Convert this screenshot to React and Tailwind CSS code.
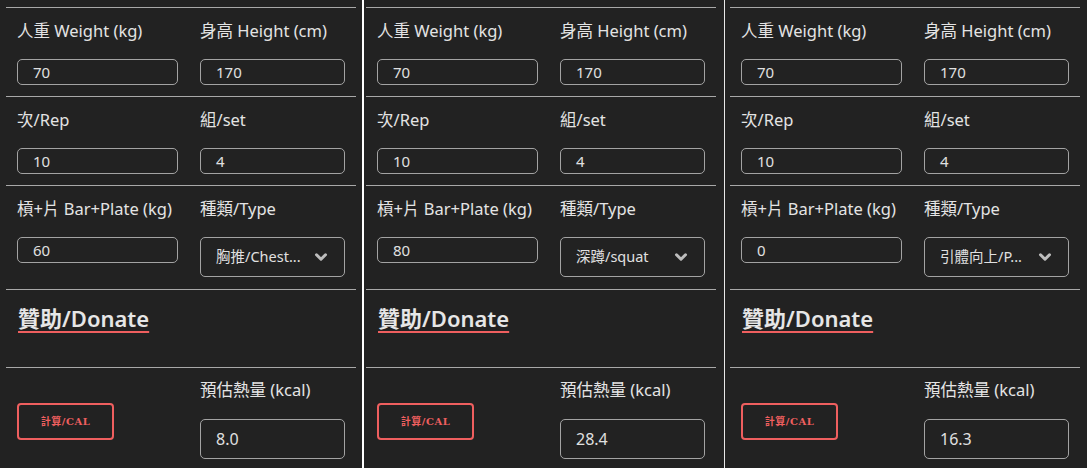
import { ChevronDown } from "lucide-react";

const panels = [
  { bar: "60", type: "胸推/Chest...", kcal: "8.0", shift: "ml-0", width: "w-[362px]" },
  { bar: "80", type: "深蹲/squat", kcal: "28.4", shift: "ml-[-4px]", width: "w-[360px]" },
  { bar: "0", type: "引體向上/P...", kcal: "16.3", shift: "ml-[-1px]", width: "w-[362px]" },
];

const font = { fontFamily: '"Noto Sans", "Noto Sans CJK TC", sans-serif' };

//Text Input
const Field = ({ label, value, wide }) => (
  <div className="flex flex-col">
    <p className="text-[16.5px] leading-[22px] text-[#e4e4e4]">{label}</p>
    <div
      className={`mt-[17px] h-[26px] rounded-[5px] border border-[#a3a3a3] pl-[15px] text-[15px] leading-[24px] text-[#e0e0e0] ${
        wide ? "w-[161px]" : "w-[145px]"
      }`}
    >
      {value}
    </div>
  </div>
);

const Panel = ({ bar, type, kcal, shift, width }) => (
  <div className={`${width} shrink-0 overflow-hidden pt-[7px]`}>
    <div className={`${shift} w-[362px] pl-[6px] pr-[6px]`}>
      {/* ROW 1 */}
      <div className="border-t border-[#a8a8a8] pt-[12px] pb-[11px] grid grid-cols-[183px_1fr] pl-[11px]">
        <Field label="人重 Weight (kg)" value="70" wide />
        <Field label="身高 Height (cm)" value="170" />
      </div>

      {/* ROW 2 */}
      <div className="border-t border-[#a8a8a8] pt-[12px] pb-[11px] grid grid-cols-[183px_1fr] pl-[11px]">
        <Field label="次/Rep" value="10" wide />
        <Field label="組/set" value="4" />
      </div>

      {/* ROW 3 */}
      <div className="border-t border-[#a8a8a8] pt-[12px] pb-[12px] grid grid-cols-[183px_1fr] pl-[11px]">
        <Field label="槓+片 Bar+Plate (kg)" value={bar} wide />
        <div className="flex flex-col">
          <p className="text-[16.5px] leading-[22px] text-[#e4e4e4]">種類/Type</p>
          <div className="mt-[17px] h-[40px] w-[145px] rounded-[5px] border border-[#a3a3a3] flex items-center justify-between pl-[15px] pr-[14px]">
            <span className="text-[14.5px] text-[#e0e0e0] whitespace-nowrap">{type}</span>
            <ChevronDown size={18} strokeWidth={4} className="text-[#bdbdbd]" />
          </div>
        </div>
      </div>

      {/* DONATE */}
      <div className="border-t border-[#a8a8a8] h-[78px] pl-[12px] pt-[14px]">
        <a className="text-[22px] leading-[28px] font-semibold text-[#e6e6e6] underline decoration-[#ef5f5f] decoration-2 underline-offset-[4px]">
          贊助/Donate
        </a>
      </div>

      {/* CALC */}
      <div className="border-t border-[#a8a8a8] pt-[11px] grid grid-cols-[183px_1fr] pl-[11px]">
        <div className="pt-[24px]">
          <button
            className="w-[97px] h-[37px] rounded-[4px] border-2 border-[#ef5f5f] text-[10px] font-bold text-[#ef5f5f] tracking-[0.5px]"
            style={{ fontFamily: '"DejaVu Serif", "Noto Sans CJK TC", serif' }}
          >
            計算/CAL
          </button>
        </div>
        <div className="flex flex-col">
          <p className="text-[16.5px] leading-[22px] text-[#e4e4e4]">預估熱量 (kcal)</p>
          <div className="mt-[18px] h-[40px] w-[145px] rounded-[5px] border border-[#a3a3a3] pl-[15px] flex items-center text-[16px] text-[#e0e0e0]">
            {kcal}
          </div>
        </div>
      </div>
    </div>
  </div>
);

export default function App() {
  return (
    <div className="flex h-[468px] w-[1087px] bg-[#222222] overflow-hidden" style={font}>
      <Panel {...panels[0]} />
      <div className="w-[2px] shrink-0 bg-white" />
      <Panel {...panels[1]} />
      <div className="w-[1px] shrink-0 bg-[#e8e8e8]" />
      <Panel {...panels[2]} />
    </div>
  );
}
